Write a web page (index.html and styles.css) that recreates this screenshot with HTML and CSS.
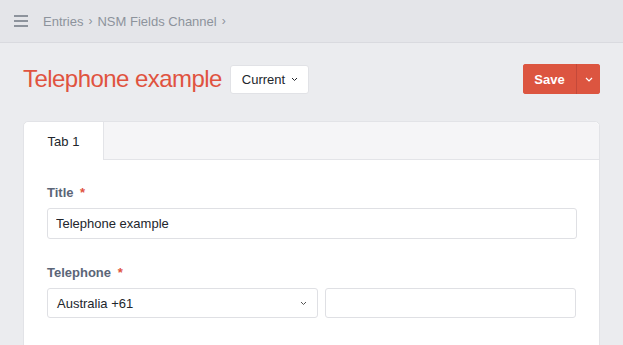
FILE: index.html
```html
<!DOCTYPE html>
<html lang="en">
<head>
    <meta charset="UTF-8">
    <title>Telephone example</title>
    <link rel="stylesheet" href="styles.css">
</head>
<body>
    <div class="topbar">
        <svg class="menu-icon" width="14" height="12" viewBox="0 0 14 12">
            <rect x="0" y="0" width="14" height="2" fill="#8d939c"/>
            <rect x="0" y="5" width="14" height="2" fill="#8d939c"/>
            <rect x="0" y="10" width="14" height="2" fill="#8d939c"/>
        </svg>
        <span class="crumb">Entries</span>
        <span class="sep">›</span>
        <span class="crumb">NSM Fields Channel</span>
        <span class="sep">›</span>
    </div>

    <div class="page">
        <div class="title-row">
            <h1>Telephone example</h1>
            <button class="version-btn">Current
                <svg width="7" height="5" viewBox="0 0 7 5"><path d="M1 1l2.5 2.5L6 1" fill="none" stroke="#22262c" stroke-width="1"/></svg>
            </button>
            <div class="save-group">
                <button class="save-btn">Save</button>
                <button class="save-more">
                    <svg width="8" height="5" viewBox="0 0 8 5"><path d="M1 1l3 3 3-3" fill="none" stroke="#fff" stroke-width="1.2"/></svg>
                </button>
            </div>
        </div>

        <div class="card">
            <div class="tabs">
                <div class="tab active">Tab 1</div>
            </div>
            <div class="card-body">
                <div class="field">
                    <label>Title <span class="req">*</span></label>
                    <input type="text" class="text-input" value="Telephone example">
                </div>
                <div class="field">
                    <label>Telephone <span class="req">*</span></label>
                    <div class="phone-row">
                        <div class="select">
                            <span>Australia +61</span>
                            <svg width="7" height="5" viewBox="0 0 7 5"><path d="M1 1l2.5 2.5L6 1" fill="none" stroke="#555" stroke-width="1"/></svg>
                        </div>
                        <input type="text" class="text-input phone-input" value="">
                    </div>
                </div>
            </div>
        </div>
    </div>
</body>
</html>
```

FILE: styles.css
```css
body {
    margin: 0;
    font-family: 'Liberation Sans', Arial, sans-serif;
    background-color: #ebecef;
    color: #22262c;
    height: 100vh;
    overflow: hidden;
}
.topbar {
    height: 43px;
    background-color: #e4e5e9;
    border-bottom: 1px solid #d9dadf;
    display: flex;
    align-items: center;
    padding-left: 14px;
    font-size: 13px;
    color: #8d939c;
    box-sizing: border-box;
}
.menu-icon {
    margin-right: 15px;
}
.sep {
    margin: 0 5px;
    font-size: 12px;
}
.page {
    padding: 20px 23px 0 23px;
}
.title-row {
    display: flex;
    align-items: center;
    height: 32px;
    margin-bottom: 26px;
}
h1 {
    margin: 0;
    font-size: 24px;
    font-weight: normal;
    color: #e0533f;
    letter-spacing: -0.55px;
}
.version-btn {
    margin-left: 8px;
    height: 29px;
    padding: 0 10px 0 11px;
    background: #fff;
    border: 1px solid #e1e2e6;
    border-radius: 3px;
    font-family: inherit;
    font-size: 13px;
    color: #22262c;
    display: flex;
    align-items: center;
    gap: 6px;
}
.save-group {
    margin-left: auto;
    display: flex;
    height: 30px;
    border-radius: 3px;
    overflow: hidden;
    background: #dc5540;
}
.save-btn {
    width: 54px;
    border: none;
    border-right: 1px solid #c4493a;
    background: #dc5540;
    color: #fff;
    font-family: inherit;
    font-weight: bold;
    font-size: 13px;
}
.save-more {
    width: 23px;
    border: none;
    background: #dc5540;
    display: flex;
    align-items: center;
    justify-content: center;
    padding: 0;
}
.card {
    background: #fff;
    border: 1px solid #e2e3e7;
    border-radius: 5px;
    height: 260px;
}
.tabs {
    display: flex;
    height: 37px;
    background: #f5f5f7;
    border-bottom: 1px solid #e3e4e8;
    border-radius: 5px 5px 0 0;
}
.tab {
    width: 80px;
    display: flex;
    align-items: center;
    justify-content: center;
    font-size: 13px;
    color: #22262c;
}
.tab.active {
    background: #fff;
    border-right: 1px solid #e3e4e8;
    border-radius: 5px 0 0 0;
    height: 38px;
    box-sizing: border-box;
}
.card-body {
    padding: 25px 23px 0 23px;
}
.field {
    margin-bottom: 26px;
}
.field label {
    display: block;
    font-size: 13px;
    font-weight: bold;
    color: #5b6577;
    margin-bottom: 8px;
}
.req {
    color: #e0533f;
    margin-left: 3px;
}
.text-input {
    display: block;
    box-sizing: border-box;
    width: 530px;
    height: 31px;
    border: 1px solid #dfe0e4;
    border-radius: 3px;
    padding: 0 8px;
    font-family: inherit;
    font-size: 13px;
    color: #22262c;
    background: #fff;
}
.phone-row {
    display: flex;
    gap: 7px;
}
.select {
    box-sizing: border-box;
    width: 272px;
    height: 30px;
    border: 1px solid #dfe0e4;
    border-radius: 3px;
    padding: 0 10px 0 9px;
    display: flex;
    align-items: center;
    justify-content: space-between;
    font-size: 13px;
}
.phone-input {
    width: 251px;
    height: 30px;
}
```
